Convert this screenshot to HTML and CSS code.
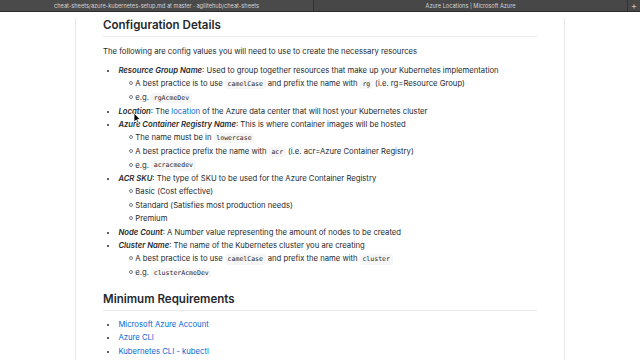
FILE: index.html
```html
<!DOCTYPE html>
<html lang="en">
<head>
<meta charset="utf-8">
<title>cheat-sheets/azure-kubernetes-setup.md</title>
<link rel="stylesheet" href="styles.css">
</head>
<body>
<div class="tabbar">
  <div class="tab tab-active">cheat-sheets/azure-kubernetes-setup.md at master · agilitehub/cheat-sheets</div>
  <div class="tab">Azure Locations | Microsoft Azure</div>
  <div class="newtab">+</div>
</div>
<div class="page">
  <article class="markdown">
    <h2 class="first">Configuration Details</h2>
    <p>The following are config values you will need to use to create the necessary resources</p>
    <ul>
      <li><em>Resource Group Name</em>: Used to group together resources that make up your Kubernetes implementation
        <ul>
          <li>A best practice is to use <code>camelCase</code> and prefix the name with <code>rg</code> (i.e. rg=Resource Group)</li>
          <li>e.g. <code>rgAcmeDev</code></li>
        </ul>
      </li>
      <li><em>Location</em>: The <a href="#">location</a> of the Azure data center that will host your Kubernetes cluster</li>
      <li><em>Azure Container Registry Name</em>: This is where container images will be hosted
        <ul>
          <li>The name must be in <code>lowercase</code></li>
          <li>A best practice prefix the name with <code>acr</code> (i.e. acr=Azure Container Registry)</li>
          <li>e.g. <code>acracmedev</code></li>
        </ul>
      </li>
      <li><em>ACR SKU</em>: The type of SKU to be used for the Azure Container Registry
        <ul>
          <li>Basic (Cost effective)</li>
          <li>Standard (Satisfies most production needs)</li>
          <li>Premium</li>
        </ul>
      </li>
      <li><em>Node Count</em>: A Number value representing the amount of nodes to be created</li>
      <li><em>Cluster Name</em>: The name of the Kubernetes cluster you are creating
        <ul>
          <li>A best practice is to use <code>camelCase</code> and prefix the name with <code>cluster</code></li>
          <li>e.g. <code>clusterAcmeDev</code></li>
        </ul>
      </li>
    </ul>
    <h2>Minimum Requirements</h2>
    <ul>
      <li><a href="#">Microsoft Azure Account</a></li>
      <li><a href="#">Azure CLI</a></li>
      <li><a href="#">Kubernetes CLI - kubectl</a></li>
    </ul>
  </article>
</div>
<svg class="cursor" width="8" height="12" viewBox="0 0 8 12"><path d="M1 1 L1 10 L3.2 8 L4.6 11 L5.8 10.4 L4.5 7.5 L7.2 7.5 Z" fill="#000" stroke="#fff" stroke-width="0.8"/></svg>
</body>
</html>
```
FILE: styles.css
```css
html, body {
  margin: 0;
  padding: 0;
  background: #fff;
  overflow: hidden;
}
body {
  width: 640px;
  height: 360px;
  position: relative;
  font-family: Inter, "Liberation Sans", sans-serif;
}
.tabbar {
  display: flex;
  height: 11px;
  background: #474747;
  border-bottom: 1px solid #2a2a2a;
}
.tab {
  flex: 1;
  display: flex;
  align-items: center;
  justify-content: center;
  color: #d4d4d4;
  font-size: 5.6px;
  white-space: nowrap;
  border-right: 1px solid #333;
}
.tab-active {
  background: #4a4a4a;
}
.newtab {
  width: 12px;
  display: flex;
  align-items: center;
  justify-content: center;
  color: #cfcfcf;
  font-size: 9px;
  line-height: 1;
}
.page {
  padding-left: 75px;
  height: 348px;
}
.markdown {
  box-sizing: border-box;
  width: 490px;
  height: 100%;
  border-left: 1px solid #e6e8eb;
  border-right: 1px solid #e6e8eb;
  padding: 0 27px 0 27px;
  font-size: 7.7px;
  line-height: 1.5;
  color: #24292e;
}
.markdown h2 {
  font-size: 1.5em;
  font-weight: 600;
  line-height: 1.25;
  margin: 13px 0 8px;
  padding-bottom: 0.3em;
  border-bottom: 1px solid #eaecef;
}
.markdown h2.first {
  margin-top: 6px;
  margin-bottom: 9px;
}
.markdown p {
  margin: 0 0 1em;
}
.markdown ul {
  margin: 0 0 1em;
  padding-left: 2em;
  list-style: disc;
}
.markdown ul ul {
  margin: 1.5px 0 0;
  padding-left: 2.2em;
  list-style: none;
}
.markdown ul ul li {
  position: relative;
}
.markdown ul ul li::before {
  content: "";
  position: absolute;
  left: -6.5px;
  top: 3px;
  width: 2px;
  height: 2px;
  border: 0.6px solid #7a7e83;
  border-radius: 50%;
}
.markdown li + li {
  margin-top: 0.25em;
}
.markdown em {
  font-weight: 600;
}
.markdown code {
  font-family: "DejaVu Sans Mono", "Liberation Mono", monospace;
  font-size: 85%;
  padding: 0.2em 0.4em;
  background: rgba(27, 31, 35, 0.04);
  border-radius: 3px;
}
.markdown a {
  color: #0366d6;
  text-decoration: none;
}
.cursor {
  position: absolute;
  left: 133px;
  top: 112px;
}
```
